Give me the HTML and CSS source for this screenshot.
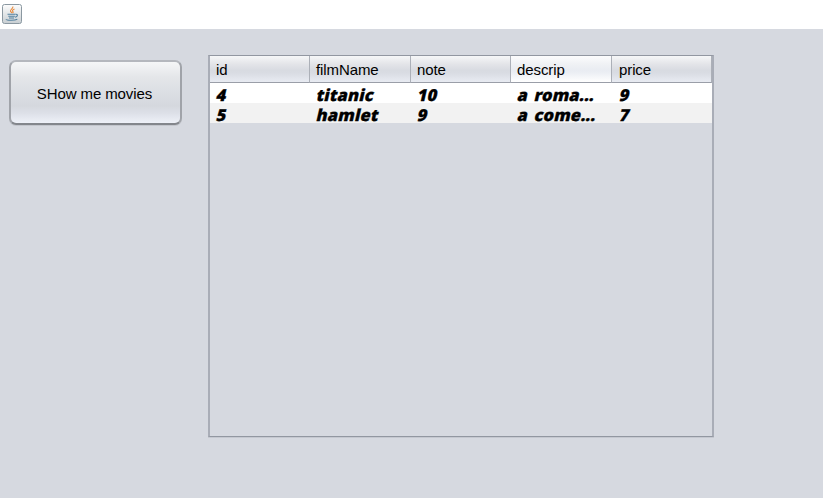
FILE: index.html
```
<!DOCTYPE html>
<html lang="en">
<head>
<meta charset="utf-8">
<title>Movies</title>
<link rel="stylesheet" href="styles.css">
</head>
<body>
<header class="titlebar">
<svg class="java-icon" width="20" height="20" viewBox="0 0 20 20">
<defs><linearGradient id="tile" x1="0" y1="0" x2="0" y2="1"><stop offset="0" stop-color="#fdfdfd"/><stop offset="1" stop-color="#c8ced2"/></linearGradient></defs>
<rect x="0.5" y="0.5" width="19" height="19" rx="2" fill="url(#tile)" stroke="#8b98a1"/>
<path d="M10.8 2.5c.8 2-2.8 3-2.3 4.6.2.9 1.1 1.2 1.4 2M12.5 5c-2 .9-2.5 1.6-1.6 2.5.5.6.2 1.2-.3 1.6" fill="none" stroke="#e88a3c" stroke-width="1.1"/>
<path d="M5.5 10.3h7.7M6.3 12.2h6.5M7 14h5M13.4 10.3c3-.5 2.5 2.5-.5 2.9M4.3 15.2c-.7 1.3 8.5 1.5 11 .1" fill="none" stroke="#53809e" stroke-width="1.1"/>
</svg>
</header>
<main class="content">
<button class="show-button">SHow me movies</button>
<div class="scroll-pane">
<table class="movies">
<colgroup><col class="c1"><col class="c2"><col class="c3"><col class="c4"><col class="c5"></colgroup>
<thead><tr><th>id</th><th>filmName</th><th>note</th><th class="hover">descrip</th><th>price</th></tr></thead>
<tbody>
<tr><td><span>4</span></td><td><span>titanic</span></td><td><span>10</span></td><td><span>a roma...</span></td><td><span>9</span></td></tr>
<tr><td><span>5</span></td><td><span>hamlet</span></td><td><span>9</span></td><td><span>a come...</span></td><td><span>7</span></td></tr>
</tbody>
</table>
</div>
</main>
</body>
</html>
```
FILE: styles.css
```
* { box-sizing: border-box; }
body {
  margin: 0;
  height: 498px;
  overflow: hidden;
  background: #d6d9e0;
  color: #000;
  font: 15px "Liberation Sans", Arial, sans-serif;
}
.titlebar {
  height: 29px;
  padding: 4px 2px;
  background: #fff;
}
.java-icon { display: block; }
.content {
  display: flex;
  align-items: flex-start;
  gap: 26px;
  padding: 26px 0 0 9px;
}
.show-button {
  width: 173px;
  height: 65px;
  margin-top: 5px;
  padding: 2px 2px 0 0;
  border: 2px solid;
  border-color: #b4b7bd #a0a3a9 #83868c #a0a3a9;
  border-radius: 7px;
  background: linear-gradient(#f5f6f7 0%, #e4e6e9 25%, #dcdfe4 48%, #d5d8de 72%, #dde0e8 84%, #eef1f8 100%);
  box-shadow: 0 1px 0 #c3c6cd;
  color: #000;
  font: inherit;
  letter-spacing: -0.1px;
}
.scroll-pane {
  width: 506px;
  height: 382px;
  border: 1px solid #9297a1;
  border-width: 1px 2px 1px 2px;
  border-color: #9297a1 #a9adb7;
  box-shadow: 0 1px 0 #c5c8d0;
}
.movies {
  width: 502px;
  table-layout: fixed;
  border-collapse: separate;
  border-spacing: 0;
}
.c1 { width: 100px; }
.c2 { width: 101px; }
.c3 { width: 100px; }
.c4 { width: 101px; }
.c5 { width: 100px; }
th {
  height: 27px;
  padding: 2px 0 0 6px;
  border-right: 1px solid #acb0b8;
  border-bottom: 1px solid #9a9ea8;
  background: linear-gradient(#f6f7f8 0%, #e4e5e9 30%, #d8dbe1 55%, #d9dce3 65%, #e8ebf2 100%);
  font-weight: 400;
  line-height: 18px;
  text-align: left;
  letter-spacing: -0.1px;
}
th:last-child { padding-left: 7px; }
th.hover { background: linear-gradient(#fcfcfd 0%, #f0f2f5 30%, #e9ecf2 55%, #eceff4 65%, #fff 100%); }
td {
  height: 20px;
  padding: 4px 0 0 7px;
  background: #fff;
  font: 900 16.5px/16px "Noto Sans", sans-serif;
  word-spacing: 2px;
  white-space: nowrap;
}
td:last-child { padding-left: 8px; }
td span {
  display: block;
  width: max-content;
  -webkit-text-stroke: 0.3px #000;
  letter-spacing: 0.15px;
  transform: skewX(-13deg);
}
tbody tr:nth-child(2) td { background: #f2f2f2; }
```
